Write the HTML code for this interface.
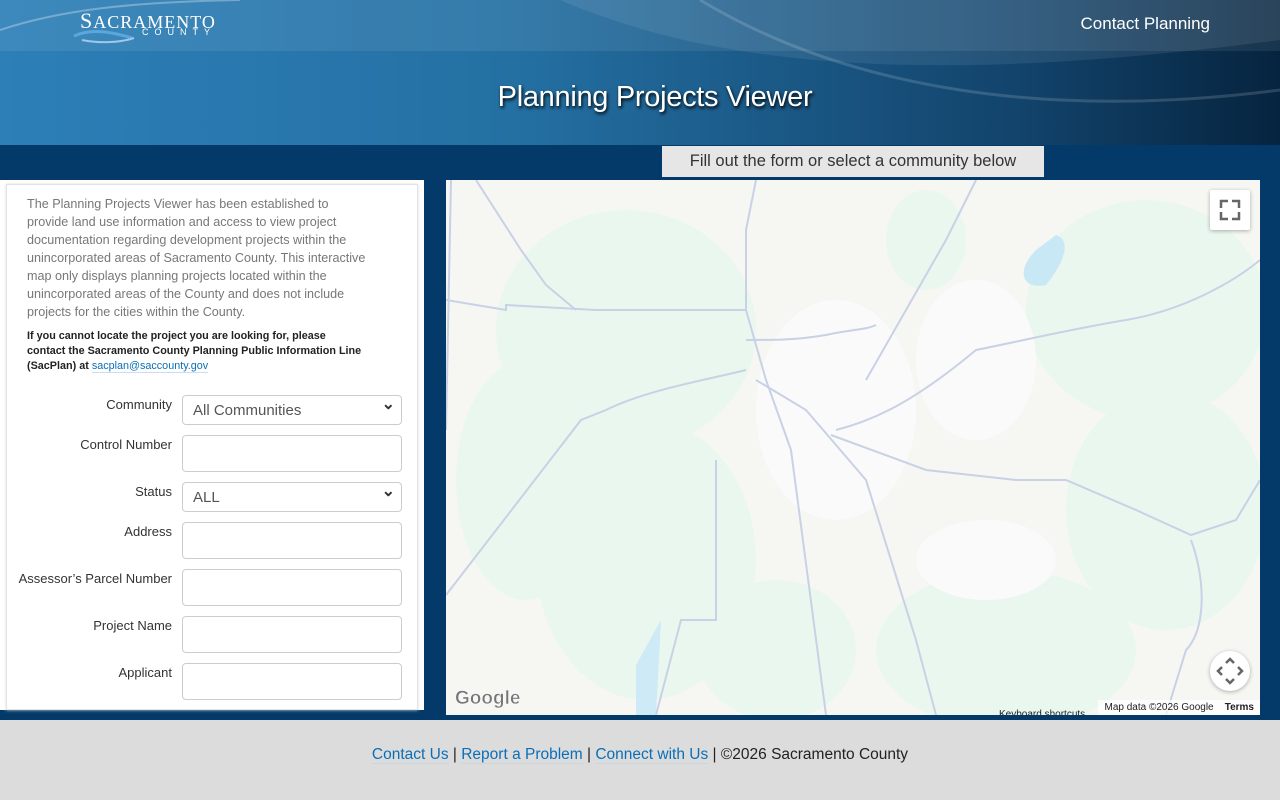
<!DOCTYPE html>
<html><head><meta charset="utf-8"><style>
*{box-sizing:border-box;margin:0;padding:0}
body{width:1280px;height:800px;overflow:hidden;background:#043a69;font-family:"Liberation Sans",sans-serif;position:relative}
.hdr{position:absolute;left:0;top:0;width:1280px;height:145px;background:linear-gradient(90deg,#2d7fb8 0%,#2470a3 40%,#12436b 80%,#06243f 100%);overflow:hidden}
.topbar{position:absolute;left:0;top:0;width:1280px;height:51px;background:rgba(255,255,255,.08)}
.title{position:absolute;top:81px;left:0;width:1310px;text-align:center;color:#fff;font-size:29px;text-shadow:1px 2px 3px #000;letter-spacing:-0.3px}
.cp{position:absolute;right:70px;top:14px;color:#fff;font-size:17px}
.band{position:absolute;left:662px;top:146px;width:382px;height:31px;background:#e6e6e6;color:#333;font-size:16.5px;text-align:center;line-height:31px}
.panel{position:absolute;left:0;top:180px;width:424px;height:530px;background:#fff}
.inner{position:absolute;left:6px;top:4px;width:412px;height:526px;border:1px solid #e3e3e3;box-shadow:0 0 3px #ddd}
.intro{position:absolute;left:27px;top:195px;color:#777;font-size:12.6px;line-height:18px;white-space:nowrap}
.bold{position:absolute;left:27px;top:329px;color:#222;font-size:10.8px;font-weight:bold;line-height:15px;white-space:nowrap}
.bold a{color:#0a6fb8;font-weight:normal;text-decoration:none;border-bottom:1px solid #cde}
.lbl{position:absolute;right:1108px;font-size:13px;color:#333;text-align:right;white-space:nowrap}
.inp{position:absolute;left:182px;width:220px;height:37px;border:1px solid #ccc;border-radius:4px;background:#fff}
.sel{height:30px;font-size:15px;color:#555;padding:6px 10px}
.sel:after{content:"⌄";position:absolute;right:6px;top:-2px;font-size:16px;color:#333;font-weight:bold}
.map{position:absolute;left:446px;top:180px;width:814px;height:535px;background:#f6f7f3;overflow:hidden}
.foot{position:absolute;left:0;top:720px;width:1280px;height:80px;background:#dcdcdc;text-align:center;font-size:15.5px;color:#222;padding-top:26px}
.foot a{color:#0a6fb8;text-decoration:none;border-bottom:1px solid #c9d6e0}
</style></head><body>
<div class="hdr">
<svg width="1280" height="145" style="position:absolute;left:0;top:0">
<path d="M560 0 C700 60 900 90 1280 40 L1280 0 Z" fill="rgba(255,255,255,.08)"/>
<path d="M700 0 C850 90 1050 120 1280 90" stroke="rgba(255,255,255,.15)" stroke-width="3" fill="none"/>
<path d="M0 30 C60 10 130 2 240 0" stroke="rgba(255,255,255,.3)" stroke-width="2" fill="none"/>
</svg>
<div class="topbar"></div>
<div style="position:absolute;left:80px;top:8px;color:#fff;font-family:'Liberation Serif',serif;font-size:22px;letter-spacing:1px">S<span style="font-size:18px">ACRAMENTO</span></div>
<div style="position:absolute;left:142px;top:27px;color:#fff;font-size:9px;letter-spacing:6px">COUNTY</div>
<svg width="80" height="20" style="position:absolute;left:72px;top:26px"><path d="M2 10 C20 2 40 6 60 12" stroke="#5aa6dd" stroke-width="3" fill="none"/><path d="M10 14 C30 18 50 16 62 12" stroke="#9ec7ea" stroke-width="2" fill="none"/></svg>
<div class="cp">Contact Planning</div>
<div class="title">Planning Projects Viewer</div>
</div>
<div class="band">Fill out the form or select a community below</div>
<div class="panel"><div class="inner"></div></div>
<div class="intro">The Planning Projects Viewer has been established to<br>provide land use information and access to view project<br>documentation regarding development projects within the<br>unincorporated areas of Sacramento County. This interactive<br>map only displays planning projects located within the<br>unincorporated areas of the County and does not include<br>projects for the cities within the County.</div>
<div class="bold">If you cannot locate the project you are looking for, please<br>contact the Sacramento County Planning Public Information Line<br>(SacPlan) at <a>sacplan@saccounty.gov</a></div>
<div class="lbl" style="top:397px">Community</div><div class="inp sel" style="top:395px">All Communities</div>
<div class="lbl" style="top:437px">Control Number</div><div class="inp" style="top:435px"></div>
<div class="lbl" style="top:484px">Status</div><div class="inp sel" style="top:482px">ALL</div>
<div class="lbl" style="top:524px">Address</div><div class="inp" style="top:522px"></div>
<div class="lbl" style="top:571px">Assessor’s Parcel Number</div><div class="inp" style="top:569px"></div>
<div class="lbl" style="top:618px">Project Name</div><div class="inp" style="top:616px"></div>
<div class="lbl" style="top:665px">Applicant</div><div class="inp" style="top:663px"></div>
<div class="map">
<svg width="814" height="535" style="position:absolute;left:0;top:0">
<g fill="#eaf7ef">
<ellipse cx="180" cy="150" rx="130" ry="120"/><ellipse cx="200" cy="380" rx="110" ry="140"/><ellipse cx="80" cy="300" rx="70" ry="120"/>
<ellipse cx="700" cy="130" rx="120" ry="110"/><ellipse cx="720" cy="330" rx="100" ry="120"/><ellipse cx="560" cy="470" rx="130" ry="80"/>
<ellipse cx="330" cy="470" rx="80" ry="70"/><ellipse cx="480" cy="60" rx="40" ry="50"/>
</g>
<g fill="#fafafa"><ellipse cx="390" cy="230" rx="80" ry="110"/><ellipse cx="530" cy="180" rx="60" ry="80"/><ellipse cx="540" cy="380" rx="70" ry="40"/></g>
<path d="M590 70 C570 90 575 110 600 105 C620 80 625 60 610 55 Z" fill="#c9e8f5"/>
<path d="M190 485 L215 440 L210 535 L190 535 Z" fill="#cfeaf7"/>
<g stroke="#c8d1e5" stroke-width="2" fill="none">
<path d="M0 415 L135 240 L160 230 C200 210 260 200 300 190"/>
<path d="M530 0 L500 60 L420 200"/>
<path d="M310 0 L300 50 L300 130"/>
<path d="M0 120 L60 130 L60 125 L150 130 L300 130 L320 200 L345 270 L380 535"/>
<path d="M310 200 L360 230 L420 300 L470 460 L490 535"/>
<path d="M385 255 L480 290 L570 300 L620 300 L690 330 L745 355 L790 340 L814 300"/>
<path d="M390 250 C430 240 470 220 530 170 C580 160 620 150 680 140 C740 130 790 100 814 80"/>
<path d="M30 0 L75 70 L100 105 L130 130"/>
<path d="M300 160 C330 160 350 160 380 155 C400 150 420 150 430 145"/>
<path d="M5 0 L0 250"/>
<path d="M270 280 L270 440 L235 440 L210 535"/>
<path d="M745 360 C760 400 760 450 740 470 L720 535"/>
</g>
</svg>
<div style="position:absolute;right:10px;top:10px;width:40px;height:40px;background:#fff;border-radius:2px;box-shadow:0 1px 4px rgba(0,0,0,.3)"><svg width="40" height="40"><path d="M11 18V11H18M22 11H29V18M29 22V29H22M18 29H11V22" stroke="#666" stroke-width="2.5" fill="none"/></svg></div>
<div style="position:absolute;right:10px;top:471px;width:40px;height:40px;background:#fff;border-radius:50%;box-shadow:0 1px 4px rgba(0,0,0,.3)"><svg width="40" height="40"><path d="M16 12L20 8L24 12M16 28L20 32L24 28M12 16L8 20L12 24M28 16L32 20L28 24" stroke="#666" stroke-width="2.5" fill="none"/></svg></div>
<div style="position:absolute;left:9px;top:508px;font-size:19px;font-weight:bold;color:#777;-webkit-text-stroke:0.5px #fff">Google</div>
<div style="position:absolute;left:553px;top:529px;font-size:10px;color:#222">Keyboard shortcuts</div>
<div style="position:absolute;right:0;top:520px;height:15px;background:rgba(255,255,255,.7);font-size:10px;color:#222;padding:2px 6px">Map data ©2026 Google &nbsp;&nbsp; <b>Terms</b></div>
</div>
<div class="foot"><a>Contact Us</a> | <a>Report a Problem</a> | <a>Connect with Us</a> | ©2026 Sacramento County</div>
</body></html>
